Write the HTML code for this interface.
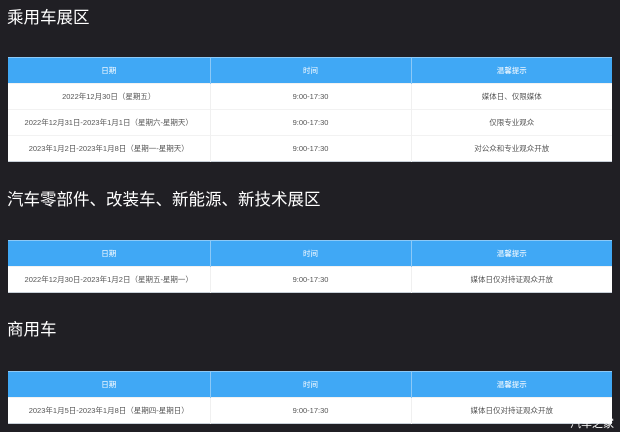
<!DOCTYPE html>
<html><head><meta charset="utf-8"><style>
*{margin:0;padding:0;box-sizing:border-box}
body{width:620px;height:432px;background:#201f24;font-family:"Liberation Sans","Noto Sans CJK SC",sans-serif;position:relative;overflow:hidden}
h2{position:absolute;left:7px;color:#fff;font-weight:normal;white-space:nowrap;line-height:1;font-size:16.5px}
table{position:absolute;left:8px;width:604px;border-collapse:collapse;background:#fff;table-layout:fixed;border-bottom:1px solid #c8d0d8}
th{background:#40a8f5;color:#fff;font-weight:normal;font-size:7.5px;height:26px;border-left:1px solid #8cc9f7;border-top:1px solid #8cc9f7}
th:first-child{border-left:none}
td{color:#555;font-size:7.5px;text-align:center;height:26px;border-left:1px solid #f0f0f0;border-top:1px solid #f2f2f2}
td:first-child{border-left:none}
col.a{width:202px}col.b{width:201px}
.wm{position:absolute;right:6px;bottom:1px;color:#fff;font-size:11px;font-family:"Noto Sans CJK SC",sans-serif}
</style></head><body>
<h2 style="top:10px">乘用车展区</h2>
<table style="top:57px"><colgroup><col class="a"><col class="b"><col></colgroup>
<tr><th>日期</th><th>时间</th><th>温馨提示</th></tr>
<tr><td>2022年12月30日（星期五）</td><td>9:00-17:30</td><td>媒体日、仅限媒体</td></tr>
<tr><td>2022年12月31日-2023年1月1日（星期六-星期天）</td><td>9:00-17:30</td><td>仅限专业观众</td></tr>
<tr><td>2023年1月2日-2023年1月8日（星期一-星期天）</td><td>9:00-17:30</td><td>对公众和专业观众开放</td></tr>
</table>
<h2 style="top:192px">汽车零部件、改装车、新能源、新技术展区</h2>
<table style="top:240px"><colgroup><col class="a"><col class="b"><col></colgroup>
<tr><th>日期</th><th>时间</th><th>温馨提示</th></tr>
<tr><td>2022年12月30日-2023年1月2日（星期五-星期一）</td><td>9:00-17:30</td><td>媒体日仅对持证观众开放</td></tr>
</table>
<h2 style="top:322px">商用车</h2>
<table style="top:371px"><colgroup><col class="a"><col class="b"><col></colgroup>
<tr><th>日期</th><th>时间</th><th>温馨提示</th></tr>
<tr><td>2023年1月5日-2023年1月8日（星期四-星期日）</td><td>9:00-17:30</td><td>媒体日仅对持证观众开放</td></tr>
</table>
<div class="wm">汽车之家</div>
</body></html>
